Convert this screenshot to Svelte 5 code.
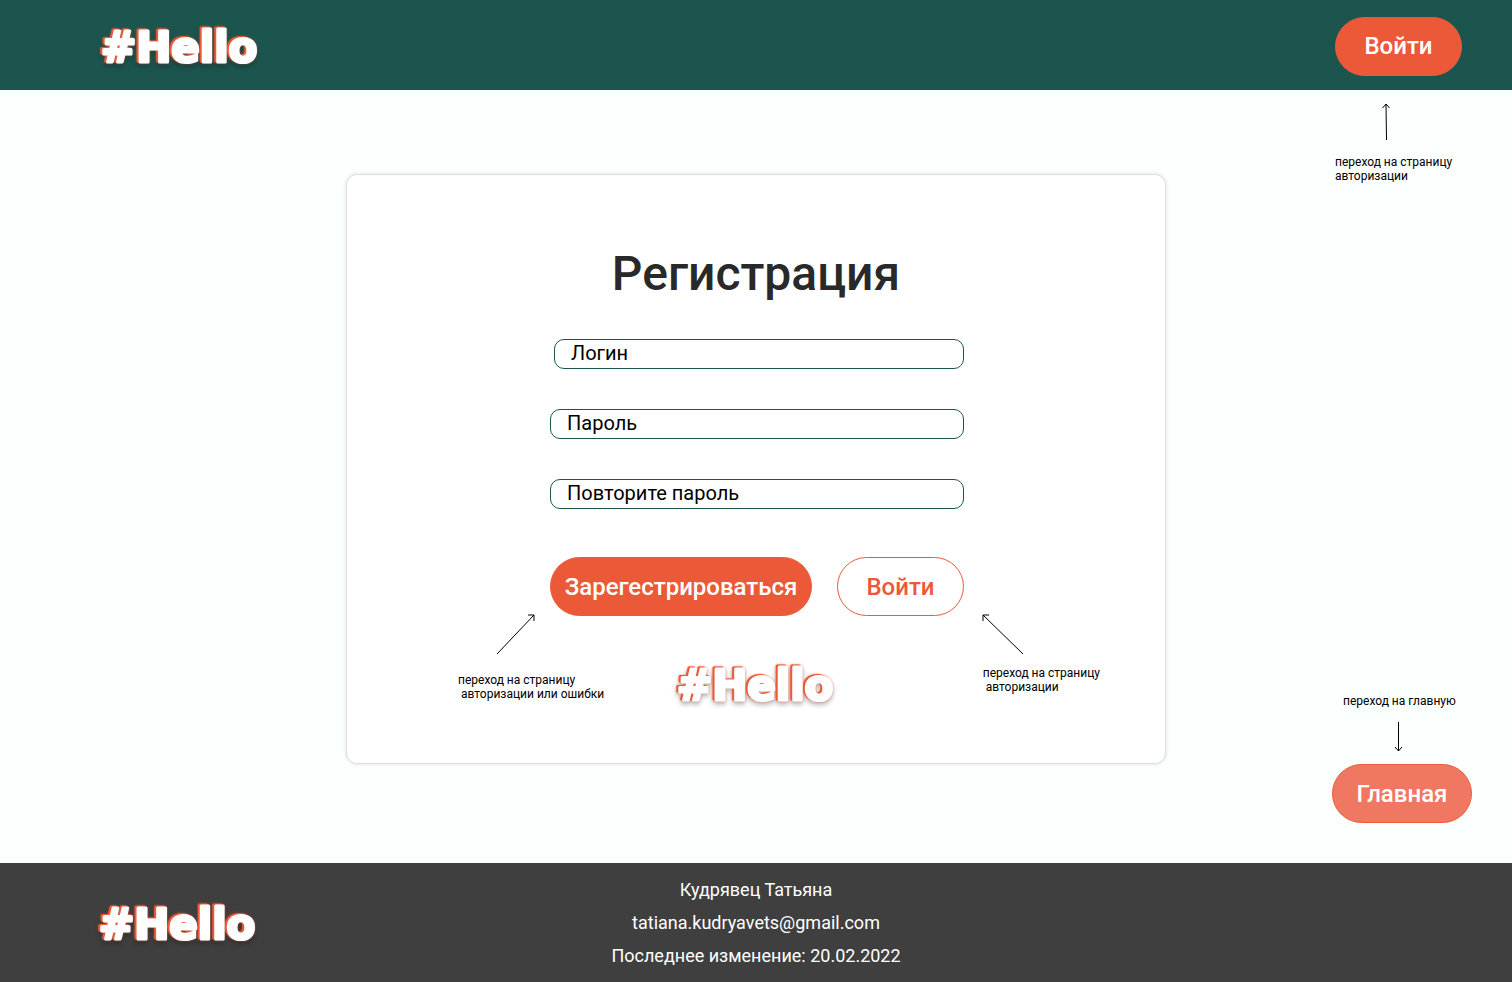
<script>
  let login = $state('');
  let password = $state('');
  let repeated = $state('');
</script>

{#snippet logo()}
  <svg class="logo" width="164" height="50" viewBox="0 0 164 50">
    <text x="1" y="41">#Hello</text>
  </svg>
{/snippet}

<div class="page">
  <header>
    {@render logo()}
    <button class="btn solid">Войти</button>
  </header>

  <main>
    <section class="card">
      <h1>Регистрация</h1>
      <form onsubmit={(e) => e.preventDefault()}>
        <input class="narrow" type="text" placeholder="Логин" aria-label="Логин" bind:value={login} />
        <input type="password" placeholder="Пароль" aria-label="Пароль" bind:value={password} />
        <input type="password" placeholder="Повторите пароль" aria-label="Повторите пароль" bind:value={repeated} />
        <div class="actions">
          <button class="btn solid wide" type="submit">Зарегестрироваться</button>
          <button class="btn outline" type="button">Войти</button>
        </div>
      </form>
      <div class="below">
        <div class="note left">
          <svg width="40" height="42" viewBox="0 0 40 42">
            <path d="M1 41 38 2M32 2h6v6" />
          </svg>
          <p>переход на страницу<br />&nbsp;авторизации или ошибки</p>
        </div>
        <div class="mark">{@render logo()}</div>
        <div class="note right">
          <svg width="42" height="42" viewBox="0 0 42 42">
            <path d="M40 41 0 2M0 8V2h6" />
          </svg>
          <p>переход на страницу<br />&nbsp;авторизации</p>
        </div>
      </div>
    </section>

    <aside>
      <div class="note top">
        <svg width="10" height="38" viewBox="0 0 10 38">
          <path d="M5.5 37 5 1M1.5 5 5 1l3.5 4" />
        </svg>
        <p>переход на страницу<br />авторизации</p>
      </div>
      <div class="note bottom">
        <p>переход на главную</p>
        <svg width="10" height="30" viewBox="0 0 10 30">
          <path d="M5.5 0v29M2 25l3.5 4L9 25" />
        </svg>
        <button class="btn home">Главная</button>
      </div>
    </aside>
  </main>

  <footer>
    {@render logo()}
    <div class="contacts">
      <span>Кудрявец Татьяна</span>
      <a href="mailto:tatiana.kudryavets@gmail.com">tatiana.kudryavets@gmail.com</a>
      <span>Последнее изменение: 20.02.2022</span>
    </div>
  </footer>
</div>

<style>
  :global(body) {
    margin: 0;
    background: #fbfffe;
  }

  .page {
    display: flex;
    flex-direction: column;
    min-height: 100vh;
    font-family: Roboto, 'Liberation Sans', sans-serif;
    color: #000;
  }

  .page * {
    box-sizing: border-box;
  }

  header {
    display: flex;
    align-items: center;
    justify-content: space-between;
    height: 90px;
    padding: 2px 50px 0 100px;
    background: #1c554e;
  }

  .logo {
    display: block;
    overflow: visible;
    filter: drop-shadow(-2px -1px 0 #ec5938) drop-shadow(0 0 1px rgba(236, 89, 56, 0.6)) drop-shadow(0 3px 2px rgba(0, 0, 0, 0.25));
  }

  .logo text {
    font-family: 'DejaVu Sans', sans-serif;
    font-size: 42px;
    font-weight: 700;
    fill: #fff;
    stroke: #fff;
    stroke-width: 3px;
    stroke-linejoin: round;
  }

  .btn {
    height: 59px;
    min-width: 127px;
    padding: 0 13px;
    border: 1px solid #ec5938;
    border-radius: 30px;
    font: 500 24px/28px Roboto, 'Liberation Sans', sans-serif;
    cursor: pointer;
  }

  .solid {
    background: #ec5938;
    color: #fff;
  }

  .wide {
    min-width: 262px;
  }

  .outline {
    background: #fff;
    color: #ec5938;
  }

  .home {
    min-width: 140px;
    background: #f07862;
    color: #fff;
  }

  main {
    display: grid;
    grid-template-columns: 1fr 820px 1fr;
    flex: 1;
  }

  .card {
    grid-column: 2;
    align-self: start;
    margin: 84px 0 98px;
    padding: 69px 0 54px;
    border: 1px solid #dcdfde;
    border-radius: 11px;
    background: #fff;
    box-shadow: 0 0 4px rgba(0, 0, 0, 0.12);
  }

  h1 {
    margin: 0 0 35px;
    font-size: 48px;
    line-height: 60px;
    font-weight: 500;
    text-align: center;
    color: #292929;
  }

  form {
    display: flex;
    flex-direction: column;
    gap: 40px;
    width: 416px;
    margin: 0 auto;
    padding-left: 2px;
  }

  input {
    height: 30px;
    padding: 0 16px 2px;
    border: 1px solid #1c554e;
    border-radius: 10px;
    background: #fff;
    font: 400 20px/24px Roboto, 'Liberation Sans', sans-serif;
    color: #000;
  }

  input::placeholder {
    color: #000;
    opacity: 1;
  }

  .narrow {
    margin-left: 4px;
  }

  .actions {
    display: flex;
    justify-content: space-between;
    margin-top: 8px;
  }

  .below {
    display: flex;
    align-items: flex-start;
    margin-top: -3px;
    padding: 0 65px 0 111px;
  }

  .note {
    display: flex;
    flex-direction: column;
    font-size: 12px;
    line-height: 14px;
  }

  .note p {
    margin: 0;
    white-space: nowrap;
  }

  .note svg {
    display: block;
    overflow: visible;
    fill: none;
    stroke: #000;
    stroke-width: 1px;
  }

  .left {
    gap: 18px;
  }

  .left svg {
    margin-left: 38px;
  }

  .right {
    gap: 11px;
    margin-left: auto;
  }

  .mark {
    margin: 46px 0 0 72px;
  }

  aside {
    display: flex;
    flex-direction: column;
    align-items: flex-end;
    justify-content: space-between;
    padding: 13px 0 40px;
  }

  .top {
    gap: 14px;
    width: 127px;
    margin-right: 50px;
  }

  .top svg {
    margin-left: 46px;
  }

  .bottom {
    gap: 14px;
    width: 140px;
    margin-right: 40px;
  }

  .bottom p {
    margin-left: 11px;
  }

  .bottom svg {
    margin-left: 61px;
  }

  .bottom .btn {
    margin-top: -2px;
  }

  footer {
    display: grid;
    grid-template-columns: 1fr auto 1fr;
    align-items: center;
    padding: 10px 98px;
    background: #3f3f3f;
    color: #fff;
  }

  .contacts {
    display: flex;
    flex-direction: column;
    font-size: 18px;
    line-height: 33px;
    text-align: center;
  }

  .contacts a {
    color: inherit;
    text-decoration: none;
  }
</style>
